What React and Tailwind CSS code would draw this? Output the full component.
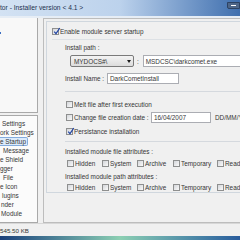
import React from 'react';

function Check({ checked }) {
  return (
    <span className="relative w-[7px] h-[7px] shrink-0 border border-[#8e8f8f] bg-linear-to-br from-[#d4d6da] to-[#fafafa]">
      {checked && (
        <svg width="8" height="8" viewBox="0 0 8 8" className="absolute left-[0px] top-[-2px]">
          <path d="M1.2 4.6 L3 6.6 L6.8 1" stroke="#2649a6" strokeWidth="1.3" fill="none" />
        </svg>
      )}
    </span>
  );
}

function CheckRow({ checked, label, className = '' }) {
  return (
    <div className={'flex items-center h-[7px] ' + className}>
      <Check checked={checked} />
      <span className="ml-[1px] leading-[7px] whitespace-nowrap">{label}</span>
    </div>
  );
}

function AttrRow({ className = '' }) {
  const items = [
    ['Hidden', 'w-[35px]'],
    ['System', 'w-[35px]'],
    ['Archive', 'w-[36px]'],
    ['Temporary', 'w-[44px]'],
    ['Read only', 'w-[40px]'],
  ];
  return (
    <div className={'flex pl-[20px] ' + className}>
      {items.map(([label, w]) => (
        <div key={label} className={'flex items-center h-[7px] shrink-0 ' + w}>
          <Check />
          <span className="ml-[1px] leading-[7px] whitespace-nowrap">{label}</span>
        </div>
      ))}
    </div>
  );
}

const menu = [
  ['Settings', 'pl-[2px]'],
  ['ork Settings', ''],
  ['e Startup', ''],
  ['Message', 'pl-[3px]'],
  ['e Shield', ''],
  ['gger', ''],
  ['File', 'pl-[3px]'],
  ['e Icon', ''],
  ['lugins', 'pl-[2px]'],
  ['nder', 'pl-[1px]'],
  ['Module', 'pl-[1px]'],
];

export default function App() {
  return (
    <div className="w-[240px] h-[240px] overflow-hidden flex flex-col bg-[#f0f0f0] font-['Liberation_Sans',Arial,sans-serif] text-[6.4px] text-[#363636] leading-none">
      {/* title bar */}
      <div className="h-[16px] shrink-0 flex items-center justify-between bg-linear-to-r from-[#d3e2f3] via-[#bcd2ec] to-[#3f6fae] relative">
        <span className="text-[6.7px] text-[#1c2f4d] whitespace-nowrap leading-none">tor - Installer version &lt; 4.1 &gt;</span>
        <span className="w-[13px] h-[7px] self-start mt-[2px] bg-[#4e6688] border border-[#2d4262] rounded-bl-[2px] flex items-center justify-center">
          <span className="w-[5px] h-[1px] bg-white" />
        </span>
      </div>
      <div className="h-[2px] shrink-0 bg-[#e6edf5]" />

      {/* main area */}
      <div className="flex h-[205px] shrink-0">
        <div className="w-[40px] flex flex-col shrink-0">
          <div className="h-[95px] bg-[#f8f8f8] border-r border-b border-[#a9a9a9] mr-[2px] relative">
            <span className="absolute left-0 top-[14px] w-[1px] h-[2px] bg-[#3d6fc2]" />
          </div>
          <div className="h-[2px]" />
          <div className="flex-1 bg-[#fbfbfb] border-t border-r border-b border-[#a9a9a9] mr-[2px] pt-[3px]">
            {menu.map(([label, pad], i) => (
              <div key={label} className="h-[9px] flex items-center">
                {i === 2 ? (
                  <span className="w-[28px] h-[9px] flex items-center bg-[#dcebfc] border border-[#84acdd] border-l-0 rounded-r-[2px] leading-[7px]">
                    {label}
                  </span>
                ) : (
                  <span className={'leading-[9px] whitespace-nowrap ' + pad}>{label}</span>
                )}
              </div>
            ))}
          </div>
        </div>

        <div className="w-[3px] shrink-0" />

        <div className="flex-1 border-l border-t border-b border-[#bdbdbd] pl-[2px] pt-[2px] min-w-0">
          {/* group box */}
          <div className="border-l border-t border-b border-[#d0d7de] pb-[1px] w-[220px]">
            <CheckRow checked label="Enable module server startup" className="mt-[6px] pl-[5px]" />
            <div className="mt-[4px] ml-[5px] h-[1px] bg-[#dde1e5]" />

            <div className="mt-[4px] pl-[18px] h-[7px] leading-[7px]">Install path :</div>
            <div className="mt-[4px] flex items-center h-[12px]">
              <div className="ml-[23px] w-[64px] h-[12px] border border-[#7a7a7a] rounded-[2px] bg-linear-to-b from-[#f4f4f4] to-[#dcdcdc] flex items-center justify-between pl-[3px] pr-[2px]">
                <span className="leading-[7px]">MYDOCS#\</span>
                <span className="w-0 h-0 border-l-[2.5px] border-r-[2.5px] border-t-[3px] border-l-transparent border-r-transparent border-t-[#1a1a1a]" />
              </div>
              <span className="ml-[3px] leading-[7px]">:</span>
              <div className="ml-[4px] flex-1 h-[12px] bg-white border border-[#abadb3] flex items-center pl-[2px]">
                <span className="leading-[7px] whitespace-nowrap">MSDCSC\darkcomet.exe</span>
              </div>
            </div>

            <div className="mt-[6px] flex items-center h-[11px] pl-[18px]">
              <span className="w-[42px] leading-[7px] whitespace-nowrap">Install Name :</span>
              <div className="w-[72px] h-[11px] bg-white border border-[#abadb3] flex items-center pl-[2px]">
                <span className="leading-[7px]">DarkCometInstall</span>
              </div>
            </div>

            <div className="mt-[7px] ml-[18px] h-[1px] bg-[#d5d9de]" />

            <CheckRow label="Melt file after first execution" className="mt-[9px] pl-[19px]" />
            <div className="mt-[4px] flex items-center h-[11px] pl-[19px]">
              <Check />
              <span className="ml-[1px] w-[77px] leading-[7px] whitespace-nowrap">Change file creation date :</span>
              <div className="w-[60px] h-[11px] bg-white border border-[#abadb3] flex items-center pl-[2px]">
                <span className="leading-[7px]">16/04/2007</span>
              </div>
              <span className="ml-[4px] leading-[7px] whitespace-nowrap">DD/MM/YYYY</span>
            </div>
            <CheckRow checked label="Persistance installation" className="mt-[5px] pl-[19px]" />

            <div className="mt-[6px] ml-[18px] h-[1px] bg-[#d5d9de]" />

            <div className="mt-[6px] pl-[18px] h-[7px] leading-[7px] whitespace-nowrap">Installed module file attributes :</div>
            <AttrRow className="mt-[5px]" />
            <div className="mt-[6px] pl-[18px] h-[7px] leading-[7px] whitespace-nowrap">Installed module path attributes :</div>
            <AttrRow className="mt-[4px]" />
          </div>
        </div>
      </div>

      {/* status bar */}
      <div className="h-[13px] shrink-0 border-t border-[#d7d7d7] flex items-center">
        <span className="text-[6.2px] leading-[7px]">545.50 KB</span>
      </div>

      {/* taskbar */}
      <div className="flex-1 bg-linear-to-r from-[#1d4079] via-[#8ccfb2] to-[#2a5c9c]" />
    </div>
  );
}
